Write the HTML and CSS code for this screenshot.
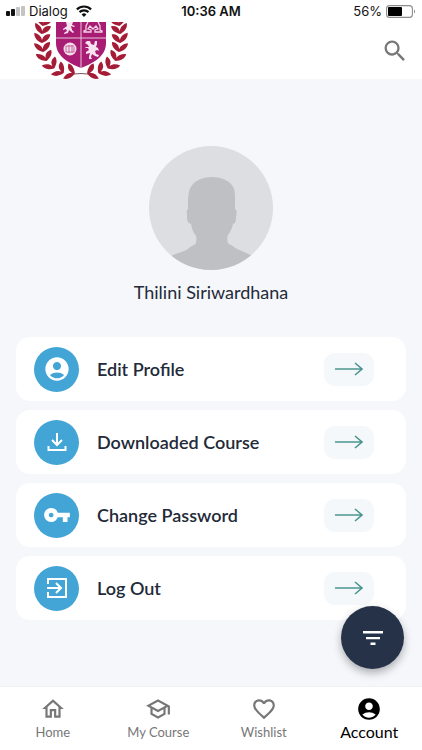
FILE: index.html
```
<!DOCTYPE html>
<html lang="en">
<head>
    <meta charset="UTF-8">
    <meta name="viewport" content="width=device-width, initial-scale=1.0">
    <title>Account</title>
    <link rel="stylesheet" href="styles.css">
</head>

<body>
    <div class="status-bar">
        <div class="status-left">
            <svg width="19" height="10" viewBox="0 0 19 10">
                <rect x="0" y="5" width="4" height="5" rx="1" fill="#111"/>
                <rect x="5" y="3" width="4" height="7" rx="1" fill="#111"/>
                <rect x="10" y="1" width="4" height="9" rx="1" fill="#c4c4c4"/>
                <rect x="15" y="0" width="4" height="10" rx="1" fill="#c4c4c4"/>
            </svg>
            <span>Dialog</span>
            <svg width="16" height="12" viewBox="0 0 16 12" fill="none" stroke="#111" stroke-width="2.2">
                <path d="M.9 4.4a10.2 10.2 0 0 1 14.2 0"/>
                <path d="M3.5 7.1a6.5 6.5 0 0 1 9 0"/>
                <path d="M8 12 5.6 9.4a3.5 3.5 0 0 1 4.8 0z" fill="#111" stroke="none"/>
            </svg>
        </div>
        <div class="status-time">10:36 AM</div>
        <div class="status-right">
            <span>56%</span>
            <svg width="30" height="13" viewBox="0 0 30 13">
                <rect x=".6" y=".6" width="25.8" height="11.8" rx="3" fill="none" stroke="#8c8c8c" stroke-width="1.1"/>
                <rect x="2" y="2" width="14" height="9" rx="1" fill="#000"/>
                <path d="M28 4.5c1.4.6 1.4 3.4 0 4z" fill="#8c8c8c"/>
            </svg>
        </div>
    </div>

    <header class="header">
        <a class="logo" href="#" aria-label="Home page">
            <svg width="96" height="57" viewBox="0 0 96 57">
                <defs>
                    <path id="leaf" d="M0 2C-5 0-8-3-8-8C-4-7-1-5 0-1C1-5 3-7 8-7C8-3 5 0 0 2z"/>
                    <g id="branch">
                        <use href="#leaf" transform="translate(10 2) rotate(12)"/>
                        <use href="#leaf" transform="translate(9 10) rotate(8)"/>
                        <use href="#leaf" transform="translate(9 19) rotate(2)"/>
                        <use href="#leaf" transform="translate(10 28) rotate(-8)"/>
                        <use href="#leaf" transform="translate(13 37) rotate(-20)"/>
                        <use href="#leaf" transform="translate(20 45) rotate(-38)"/>
                        <use href="#leaf" transform="translate(29 50) rotate(-56)"/>
                        <use href="#leaf" transform="translate(40 51) rotate(-74)"/>
                    </g>
                </defs>
                <g fill="#a51c36">
                    <use href="#branch"/>
                    <use href="#branch" transform="translate(96 0) scale(-1 1)"/>
                </g>
                <path d="M41 52q7-1 14 0" fill="none" stroke="#7d5560"/>
                <path d="M23 0h50v21c0 13-12 20-25 25C35 41 23 34 23 21z" fill="#a81c74"/>
                <path d="M48 0v46M23 16h50" stroke="#e9c3dc"/>
                <circle cx="37" cy="27" r="6.5" fill="#f3dcea"/>
                <path d="M33 24v6M36 23v8M39 23v8M41 25v5M33 24h8M33 30h8" stroke="#b7508f" stroke-width=".8"/>
                <!-- lions -->
                <path d="M52 21l2-2 3 0 1 3 3 1 1-4 2 0 0 3-1 3 2 1 1 3-2-1-2 1 1 3 3 1-1 2-3-1-3-2-1 3 1 2-3 0 0-2 1-4-4 1 0-2 3-2-1-2-3 0 1-1 3 0-1-2z" fill="#f6e3ef"/>
                <path d="M40 0l-1 3 3 1-1 1-3-1 1 4 2 2-1 1-4-3-1 3-4 1 0-1 3-2-1-2-3 1 0-1 4-3-1-4z" fill="#f6e3ef"/>
                <path d="M55 0l-2 4 0 4-2 1v1h7V8l-3-1 2-3 3 3 3-3 2 3-3 1v2h7V9l-2-1 0-4-2-4" fill="none" stroke="#f0d3e4" stroke-width="1.3"/>
            </svg>
        </a>
        <button class="search-button" aria-label="Search">
            <svg width="28" height="28" viewBox="0 0 24 24" fill="#777">
                <path d="M15.5 14h-.79l-.28-.27A6.471 6.471 0 0 0 16 9.5 6.5 6.5 0 1 0 9.5 16c1.61 0 3.09-.59 4.23-1.57l.27.28v.79l5 4.99L20.49 19l-4.99-5zm-6 0C7.01 14 5 11.99 5 9.5S7.01 5 9.5 5 14 7.01 14 9.5 11.99 14 9.5 14z"/>
            </svg>
        </button>
    </header>

    <main class="content">
        <div class="profile">
            <svg class="avatar" viewBox="0 0 124 124">
                <defs>
                    <clipPath id="round"><circle cx="62" cy="62" r="62"/></clipPath>
                </defs>
                <g clip-path="url(#round)">
                    <rect width="124" height="124" fill="#dddee2"/>
                    <path d="M63 31c-9 0-15 3-19 7-5 5-5 12-5 25-2 1-1 5-1 8 0 4 1 6 4 7 1 6 3 9 5 12 1 3 0 5 0 7-2 3-6 3-8 6-5 3-11 4-17 7v16h82v-16c-6-3-12-5-18-8-2-3-5-3-7-5-1-3-1-5 0-8 2-3 4-6 5-11 3-1 3-4 3-7 1-3 1-7-1-8 0-13 1-20-4-25-4-4-10-7-19-7z" fill="#bfc0c4"/>
                </g>
            </svg>
            <h1>Thilini Siriwardhana</h1>
        </div>

        <div class="menu">
            <a class="menu-item" href="#">
                <span class="menu-icon">
                    <svg width="28" height="28" viewBox="0 0 24 24">
                        <path d="M12 2C6.48 2 2 6.48 2 12s4.48 10 10 10 10-4.48 10-10S17.52 2 12 2zm0 4c1.93 0 3.5 1.57 3.5 3.5S13.93 13 12 13s-3.5-1.57-3.5-3.5S10.07 6 12 6zm0 14c-2.03 0-4.43-.82-6.14-2.88a9.95 9.95 0 0 1 12.28 0C16.43 19.18 14.03 20 12 20z"/>
                    </svg>
                </span>
                <span class="menu-text">Edit Profile</span>
                <span class="menu-arrow">
                    <svg width="28" height="14" viewBox="0 0 28 14"><path d="M0 7h27M20 1l7 6-7 6"/></svg>
                </span>
            </a>
            <a class="menu-item" href="#">
                <span class="menu-icon">
                    <svg class="outline" width="20" height="20" viewBox="0 0 20 20">
                        <path d="M10 1v11M5 8l5 5 5-5M1.5 14v4h17v-4"/>
                    </svg>
                </span>
                <span class="menu-text">Downloaded Course</span>
                <span class="menu-arrow">
                    <svg width="28" height="14" viewBox="0 0 28 14"><path d="M0 7h27M20 1l7 6-7 6"/></svg>
                </span>
            </a>
            <a class="menu-item" href="#">
                <span class="menu-icon">
                    <svg width="28" height="28" viewBox="0 0 24 24">
                        <path d="M12.65 10A5.99 5.99 0 0 0 7 6c-3.31 0-6 2.69-6 6s2.69 6 6 6a5.99 5.99 0 0 0 5.65-4H17v4h4v-4h2v-4H12.65zM7 14c-1.1 0-2-.9-2-2s.9-2 2-2 2 .9 2 2-.9 2-2 2z"/>
                    </svg>
                </span>
                <span class="menu-text">Change Password</span>
                <span class="menu-arrow">
                    <svg width="28" height="14" viewBox="0 0 28 14"><path d="M0 7h27M20 1l7 6-7 6"/></svg>
                </span>
            </a>
            <a class="menu-item" href="#">
                <span class="menu-icon">
                    <svg class="outline" width="22" height="22" viewBox="0 0 22 22">
                        <path d="M2 7V2h18v18H2v-5M1 11h13M10 6l5 5-5 5"/>
                    </svg>
                </span>
                <span class="menu-text">Log Out</span>
                <span class="menu-arrow">
                    <svg width="28" height="14" viewBox="0 0 28 14"><path d="M0 7h27M20 1l7 6-7 6"/></svg>
                </span>
            </a>
        </div>
    </main>

    <button class="filter-button" aria-label="Filter">
        <svg width="20" height="14" viewBox="0 0 20 14" fill="#fff">
            <path d="M0 0h20v2.4H0zM3 6h14v2.3H3zM7.5 11.5h5v2.4h-5z"/>
        </svg>
    </button>

    <nav class="bottom-nav">
        <a href="#">
            <svg width="26" height="26" viewBox="0 0 24 24">
                <path d="m12 5.69 5 4.5V18h-2v-6H9v6H7v-7.81l5-4.5M12 3 2 12h3v8h6v-6h2v6h6v-8h3L12 3z"/>
            </svg>
            <span>Home</span>
        </a>
        <a href="#">
            <svg width="26" height="26" viewBox="0 0 24 24">
                <path d="M12 3 1 9l4 2.18v6L12 21l7-3.82v-6l2-1.09V17h2V9L12 3zm6.82 6L12 12.72 5.18 9 12 5.28 18.82 9zM17 15.99l-5 2.73-5-2.73v-3.72L12 15l5-2.73v3.72z"/>
            </svg>
            <span>My Course</span>
        </a>
        <a href="#">
            <svg width="26" height="26" viewBox="0 0 24 24">
                <path d="M16.5 3c-1.74 0-3.41.81-4.5 2.09C10.91 3.81 9.24 3 7.5 3 4.42 3 2 5.42 2 8.5c0 3.78 3.4 6.86 8.55 11.54L12 21.35l1.45-1.32C18.6 15.36 22 12.28 22 8.5 22 5.42 19.58 3 16.5 3zm-4.4 15.55-.1.1-.1-.1C7.14 14.24 4 11.39 4 8.5 4 6.5 5.5 5 7.5 5c1.54 0 3.04.99 3.57 2.36h1.87C13.46 5.99 14.96 5 16.5 5c2 0 3.5 1.5 3.5 3.5 0 2.89-3.14 5.74-7.9 10.05z"/>
            </svg>
            <span>Wishlist</span>
        </a>
        <a href="#" class="active">
            <svg width="26" height="26" viewBox="0 0 24 24">
                <path d="M12 2C6.48 2 2 6.48 2 12s4.48 10 10 10 10-4.48 10-10S17.52 2 12 2zm0 4c1.93 0 3.5 1.57 3.5 3.5S13.93 13 12 13s-3.5-1.57-3.5-3.5S10.07 6 12 6zm0 14c-2.03 0-4.43-.82-6.14-2.88a9.95 9.95 0 0 1 12.28 0C16.43 19.18 14.03 20 12 20z"/>
            </svg>
            <span>Account</span>
        </a>
    </nav>
</body>
</html>
```
FILE: styles.css
```
* {
    box-sizing: border-box;
}

body {
    font-family: 'Lato', sans-serif;
    margin: 0;
    min-height: 100vh;
    display: flex;
    flex-direction: column;
    background-color: #f5f7fb;
    color: #232a38;
}

svg {
    display: block;
    flex-shrink: 0;
}

a {
    color: inherit;
    text-decoration: none;
}

button {
    border: none;
    padding: 0;
    cursor: pointer;
}

.status-bar {
    display: grid;
    grid-template-columns: 1fr auto 1fr;
    align-items: center;
    height: 22px;
    padding: 0 6px;
    background: #fff;
    color: #111;
    font-family: 'Inter', sans-serif;
    font-size: 13px;
}

.status-left,
.status-right {
    display: flex;
    align-items: center;
    gap: 4px;
}

.status-left span {
    margin-right: 4px;
}

.status-right {
    justify-content: flex-end;
}

.status-time {
    font-weight: 600;
}

.header {
    display: flex;
    justify-content: space-between;
    align-items: center;
    height: 57px;
    padding: 0 13px 0 33px;
    background: #fff;
}

.search-button {
    background: none;
}

.content {
    flex: 1;
    padding: 67px 16px 66px;
}

.profile {
    text-align: center;
}

.avatar {
    width: 124px;
    height: 124px;
    margin: 0 auto;
}

.profile h1 {
    margin: 10px 0 32px;
    font-size: 18px;
    line-height: 25px;
    font-weight: 400;
}

.menu {
    display: flex;
    flex-direction: column;
    gap: 9px;
}

.menu-item {
    display: flex;
    align-items: center;
    height: 64px;
    padding: 0 32px 0 18px;
    background: #fff;
    border-radius: 14px;
}

.menu-icon {
    display: flex;
    align-items: center;
    justify-content: center;
    width: 45px;
    height: 45px;
    margin-right: 18px;
    border-radius: 50%;
    background: #42a5d6;
}

.menu-icon svg {
    fill: #fff;
}

.menu-icon .outline {
    fill: none;
    stroke: #fff;
    stroke-width: 2;
}

.menu-text {
    flex: 1;
    font-size: 18px;
    line-height: 24px;
    font-weight: 600;
}

.menu-arrow {
    display: flex;
    align-items: center;
    justify-content: center;
    width: 50px;
    height: 33px;
    border-radius: 11px;
    background: #f5f8fa;
}

.menu-arrow svg {
    fill: none;
    stroke: #4c9590;
    stroke-width: 1.6;
}

.filter-button {
    position: fixed;
    right: 18px;
    bottom: 81px;
    display: flex;
    align-items: center;
    justify-content: center;
    width: 63px;
    height: 63px;
    border-radius: 50%;
    background: #263248;
    box-shadow: 0 4px 8px rgba(0, 0, 0, 0.3);
}

.bottom-nav {
    position: sticky;
    bottom: 0;
    display: grid;
    grid-template-columns: repeat(4, 1fr);
    height: 64px;
    border-top: 1px solid #edf5f4;
    background: #fff;
    color: #777;
    font-size: 13px;
    line-height: 20px;
}

.bottom-nav a {
    display: flex;
    flex-direction: column;
    align-items: center;
    padding-top: 9px;
}

.bottom-nav svg {
    fill: currentColor;
}

.bottom-nav .active {
    color: #000;
    font-size: 16px;
}
```
